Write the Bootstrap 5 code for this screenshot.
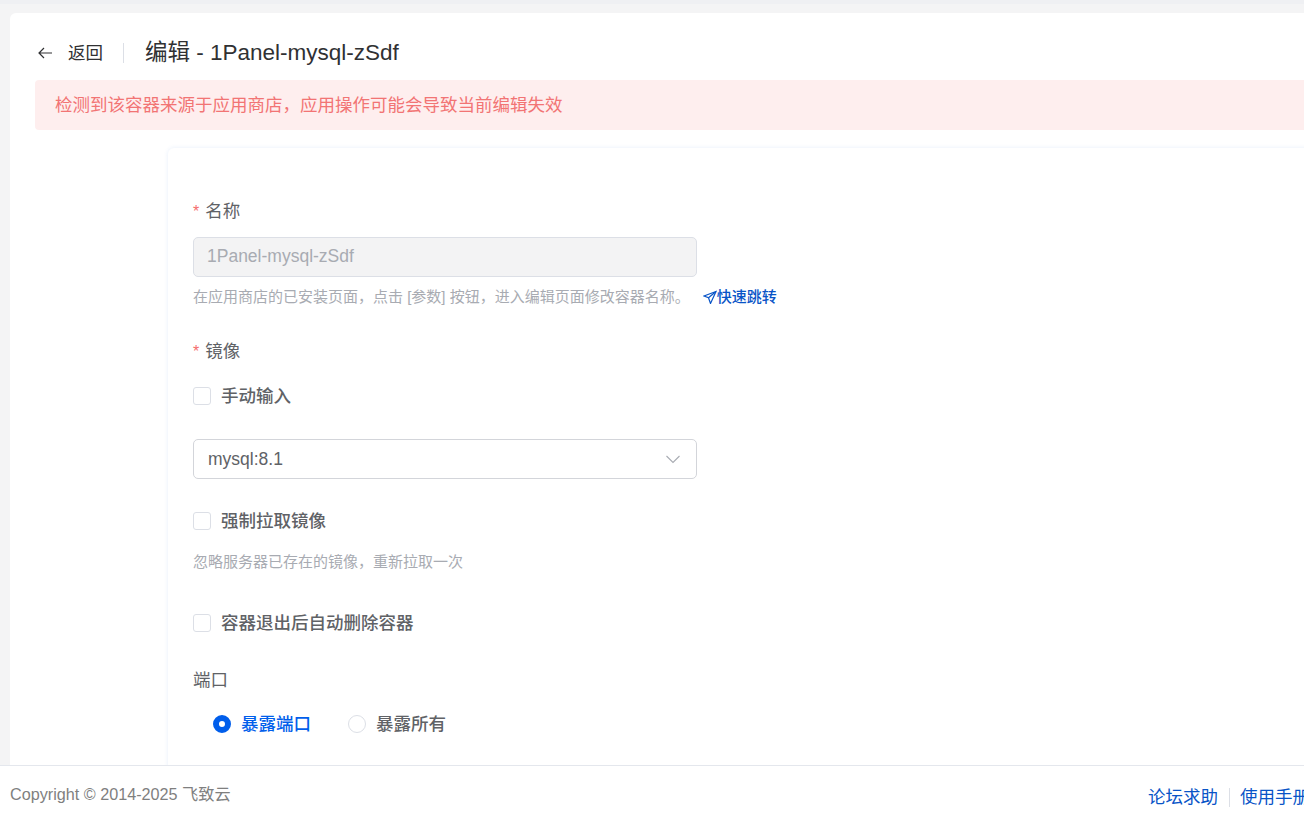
<!DOCTYPE html>
<html lang="zh-CN">
<head>
<meta charset="utf-8">
<title>编辑</title>
<link href="https://cdn.jsdelivr.net/npm/bootstrap@5.3.0/dist/css/bootstrap.min.css" rel="stylesheet">
<style>
html,body{height:100%}
body{font-family:"Liberation Sans","Noto Sans CJK SC",sans-serif;background:#f4f4f5;color:#606266;overflow:hidden;font-size:17.5px}
.top-strip{height:4px;background:#eff0f3;flex:none}
.main-area{flex:1 1 0;min-height:0;overflow:hidden;padding:9px 0 0 10px}
.panel-box{width:1400px;height:900px;background:#fff;border-radius:6px 0 0 0;padding:0 0 0 25px}
.head-row{height:67px;padding-top:13px;color:#303133}
.back-btn{color:#303133;font-size:17.5px;line-height:24px;width:88px;flex:none}
.back-btn svg{width:18px;height:18px;margin-right:14px;margin-left:1px}
.head-sep{width:1px;height:20px;background:#dcdfe6;flex:none}
.head-title{font-size:22.5px;line-height:28px;margin-left:21px;color:#303133}
.warn-bar{height:50px;background:#feeeee;color:#f27474;border-radius:4px 0 0 4px;font-size:17.5px;line-height:50px;padding-left:20px}
.form-box{margin:18px 0 0 133px;padding:0 0 0 25px;border-radius:6px;box-shadow:0 0 4px rgba(64,120,220,.13);height:700px}
.req{color:#f56c6c;font-size:16px;margin-right:6px}
.lab{line-height:24px;color:#606266;font-size:17.5px}
.lab-name{padding-top:51px}
.fake-input{width:504px;height:40px;border:1px solid #dcdfe6;border-radius:5px;padding-left:14px;line-height:37px;font-size:17.5px}
.fake-off{background:#f3f3f4;color:#a8abb2;margin-top:13px;padding-left:13px}
.tip{font-size:15px;color:#a8abb2;line-height:20px}
.jump{color:#0854c7;font-size:15px;font-weight:500;margin-left:13px}
.jump svg{width:14px;height:14px;vertical-align:-2px}
.box-check{width:18px;height:18px;border:1px solid #dcdfe6;border-radius:3px;background:#fff;flex:none;margin-right:10px}
.check-row{font-size:17.5px;line-height:24px;color:#606266;font-weight:500}
.sel-arrow{width:16px;height:16px;margin-right:15px}
.radio-dot{width:18px;height:18px;border-radius:50%;flex:none;margin-right:10px}
.radio-on{background:#fff;border:6px solid #005eeb}
.radio-off{border:1px solid #dcdfe6;background:#fff}
.radio-text-on{color:#005eeb;font-weight:500}
.radio-text-off{color:#606266;font-weight:500}
.foot-bar{height:51px;flex:none;background:#fff;border-top:1px solid #e4e7ed;padding-left:10px}
.copy-text{font-size:16.2px;color:#7f7f7f;margin-top:18px;line-height:20px}
.foot-link{color:#0854c7;font-size:17.5px;line-height:24px;text-decoration:none;white-space:nowrap}
.foot-links{width:156px;margin-top:19px;overflow:hidden;flex:none;white-space:nowrap}
.foot-sep{width:1px;height:19px;background:#dcdfe6;margin:0 10px 0 11px;flex:none}
.gap-a{margin-top:32px}.gap-b{margin-top:20px}.gap-c{margin-top:31px}.gap-d{margin-top:30px}.gap-g{margin-top:33px}.gap-h{margin-top:20px}
.tip-a{margin-top:10px}.tip-b{margin-top:19px}.row-del{margin-top:39px}.radio-row{padding-left:20px}.radio-second{margin-left:37px}
.sel-box{padding-right:0;border-color:#d3d5da;color:#606266}
</style>
</head>
<body class="d-flex flex-column">
<div class="top-strip"></div>
<div class="main-area">
  <div class="panel-box">
    <div class="head-row d-flex align-items-center">
      <div class="back-btn d-flex align-items-center">
        <svg viewBox="0 0 18 18" fill="none" stroke="#303133" stroke-width="1.2"><path d="M16 9H3M8 4L3 9l5 5"/></svg>返回
      </div>
      <div class="head-sep"></div>
      <div class="head-title">编辑 - 1Panel-mysql-zSdf</div>
    </div>
    <div class="warn-bar">检测到该容器来源于应用商店，应用操作可能会导致当前编辑失效</div>
    <div class="form-box">
      <div class="lab lab-name"><span class="req">*</span>名称</div>
      <div class="fake-input fake-off">1Panel-mysql-zSdf</div>
      <div class="tip tip-a d-flex align-items-center">
        <span>在应用商店的已安装页面，点击 [参数] 按钮，进入编辑页面修改容器名称。</span>
        <span class="jump"><svg viewBox="0 0 14 14" fill="none" stroke="#0854c7" stroke-width="1.2"><path d="M13 1.500L1 6l4.500 1.800L7.500 13.500z"/><path d="M13 1.500L5.500 7.800"/></svg>快速跳转</span>
      </div>
      <div class="lab gap-a"><span class="req">*</span>镜像</div>
      <div class="check-row d-flex align-items-center gap-b"><span class="box-check"></span>手动输入</div>
      <div class="fake-input sel-box d-flex align-items-center justify-content-between gap-c">
        <span>mysql:8.1</span>
        <svg class="sel-arrow" viewBox="0 0 16 16" fill="none" stroke="#a8abb2" stroke-width="1.1"><path d="M1.500 5L8 11.500 14.500 5"/></svg>
      </div>
      <div class="check-row d-flex align-items-center gap-d"><span class="box-check"></span>强制拉取镜像</div>
      <div class="tip tip-b">忽略服务器已存在的镜像，重新拉取一次</div>
      <div class="check-row row-del d-flex align-items-center"><span class="box-check"></span>容器退出后自动删除容器</div>
      <div class="lab gap-g">端口</div>
      <div class="check-row radio-row d-flex align-items-center gap-h">
        <span class="radio-dot radio-on"></span><span class="radio-text-on">暴露端口</span>
        <span class="radio-dot radio-off radio-second"></span><span class="radio-text-off">暴露所有</span>
      </div>
    </div>
  </div>
</div>
<div class="foot-bar d-flex justify-content-between">
  <div class="copy-text">Copyright © 2014-2025 飞致云</div>
  <div class="foot-links d-flex align-items-center align-self-start">
    <a class="foot-link" href="#">论坛求助</a><span class="foot-sep"></span><a class="foot-link" href="#">使用手册</a>
  </div>
</div>
<script src="https://cdn.jsdelivr.net/npm/bootstrap@5.3.0/dist/js/bootstrap.bundle.min.js"></script>
</body>
</html>
